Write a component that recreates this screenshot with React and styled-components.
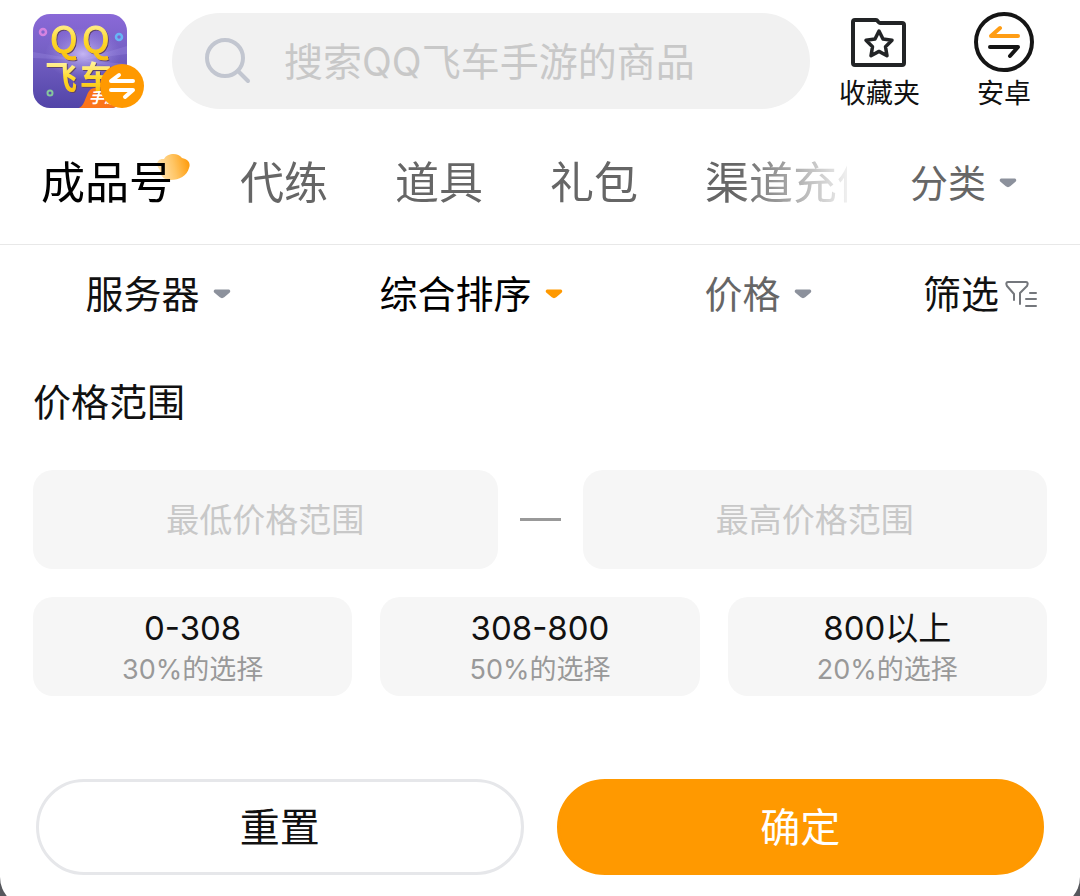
import { useState } from "react";
import styled, { createGlobalStyle } from "styled-components";

const tabs = ["成品号", "代练", "道具", "礼包", "渠道充值"];

const ranges = [
    { label: "0-308", note: "30%的选择" },
    { label: "308-800", note: "50%的选择" },
    { label: "800以上", note: "20%的选择" },
];

const App = () => {
    return (
        <>
            <GlobalStyle />
            <Page>
                <Sheet>
                    <Header />
                    <TabBar />
                    <FilterBar />
                    <PricePanel />
                </Sheet>
            </Page>
        </>
    );
}

const Header = () => {
    return (
        <HeaderContainer>
            <GameButton type="button" aria-label="切换游戏">
                <GameLogo />
            </GameButton>
            <SearchBox>
                <SearchIcon />
                <SearchInput type="search" aria-label="搜索商品" placeholder="搜索QQ飞车手游的商品" />
            </SearchBox>
            <HeaderLinks>
                <HeaderLink href="#favorites">
                    <FolderIcon />
                    <span>收藏夹</span>
                </HeaderLink>
                <HeaderLink href="#android">
                    <SwitchIcon />
                    <span>安卓</span>
                </HeaderLink>
            </HeaderLinks>
        </HeaderContainer>
    );
}

const TabBar = () => {
    const [active, setActive] = useState("成品号");

    return (
        <TabContainer>
            <TabList>
                {tabs.map((tab) => (
                    <Tab key={tab} type="button" $active={tab === active} onClick={() => setActive(tab)}>
                        {tab === active && <CloudMark />}
                        <TabText>{tab}</TabText>
                    </Tab>
                ))}
            </TabList>
            <MenuButton type="button" $color="#666666">
                分类
                <Arrow />
            </MenuButton>
        </TabContainer>
    );
}

const FilterBar = () => {
    return (
        <FilterContainer>
            <MenuButton type="button">
                服务器
                <Arrow />
            </MenuButton>
            <MenuButton type="button" $color="#000000">
                综合排序
                <Arrow color="#ff9900" />
            </MenuButton>
            <MenuButton type="button" $color="#666666">
                价格
                <Arrow />
            </MenuButton>
            <MenuButton type="button" $gap="6px">
                筛选
                <FunnelIcon />
            </MenuButton>
        </FilterContainer>
    );
}

const PricePanel = () => {
    const [low, setLow] = useState("");
    const [high, setHigh] = useState("");

    return (
        <Panel>
            <PanelTitle>价格范围</PanelTitle>
            <RangeRow>
                <PriceInput
                    aria-label="最低价格范围"
                    placeholder="最低价格范围"
                    inputMode="numeric"
                    value={low}
                    onChange={(e) => setLow(e.target.value)}
                />
                <Dash />
                <PriceInput
                    aria-label="最高价格范围"
                    placeholder="最高价格范围"
                    inputMode="numeric"
                    value={high}
                    onChange={(e) => setHigh(e.target.value)}
                />
            </RangeRow>
            <ChipRow>
                {ranges.map((range) => (
                    <Chip key={range.label} type="button">
                        <ChipLabel>{range.label}</ChipLabel>
                        <ChipNote>{range.note}</ChipNote>
                    </Chip>
                ))}
            </ChipRow>
            <ActionRow>
                <ActionButton type="button">重置</ActionButton>
                <ActionButton type="button" $primary>确定</ActionButton>
            </ActionRow>
        </Panel>
    );
}

const GameLogo = () => (
    <svg width="112" height="96" viewBox="0 0 112 96" aria-hidden="true">
        <defs>
            <linearGradient id="sky" x1="0" y1="0" x2="0" y2="1">
                <stop offset="0" stopColor="#8a69d8" />
                <stop offset="0.45" stopColor="#735fc2" />
                <stop offset="1" stopColor="#5244a8" />
            </linearGradient>
            <radialGradient id="glow">
                <stop offset="0" stopColor="#d9cbff" stopOpacity="0.8" />
                <stop offset="1" stopColor="#a99aec" stopOpacity="0" />
            </radialGradient>
            <linearGradient id="gold" x1="0" y1="0" x2="0" y2="1">
                <stop offset="0.2" stopColor="#fff3a6" />
                <stop offset="0.55" stopColor="#ffdb2e" />
                <stop offset="1" stopColor="#f7b800" />
            </linearGradient>
            <filter id="shade" x="-10%" y="-10%" width="120%" height="120%">
                <feDropShadow dx="1" dy="1" stdDeviation="0" floodColor="#5f4468" />
            </filter>
            <clipPath id="tile">
                <rect width="94" height="94" rx="17" />
            </clipPath>
        </defs>
        <g clipPath="url(#tile)">
            <rect width="94" height="94" fill="url(#sky)" />
            <path d="M48 46L0 38v6zM48 46L94 32v8zM48 46L94 50v6z" fill="#a090e4" opacity="0.3" />
            <ellipse cx="50" cy="40" rx="38" ry="26" fill="url(#glow)" />
            <path d="M46 94c8-3 6-20 16-20h32v20z" fill="#fb7419" />
            <g fontFamily='"Noto Sans CJK SC", sans-serif' fontWeight="700" filter="url(#shade)">
                <text x="17 49" y="39" fontSize="37" fontWeight="400" stroke="url(#gold)" fill="url(#gold)">QQ</text>
                <text x="12 47" y="75" fontSize="32" fill="url(#gold)">飞车</text>
            </g>
            <text x="56" y="89" fontFamily='"Noto Sans CJK SC", sans-serif' fontSize="15" fontWeight="700" fontStyle="italic" fill="#ffffff">手游</text>
        </g>
        <circle cx="10" cy="18" r="3" fill="none" stroke="#d583e0" strokeWidth="2.5" />
        <circle cx="86" cy="23" r="3" fill="none" stroke="#67b5f5" strokeWidth="2.5" />
        <circle cx="17" cy="79" r="2.5" fill="none" stroke="#86c69d" strokeWidth="2" />
        <circle cx="89" cy="72" r="22" fill="#ff9900" />
        <g fill="none" stroke="#ffffff" strokeWidth="4" strokeLinecap="round" strokeLinejoin="round">
            <path d="M100 67H78l8-6" />
            <path d="M78 76h22l-8 7" />
        </g>
    </svg>
);

const SearchIcon = () => (
    <svg width="46" height="46" viewBox="0 0 46 46" fill="none" stroke="#c2c6d0" strokeWidth="4" strokeLinecap="round" aria-hidden="true">
        <circle cx="20" cy="20" r="18" />
        <path d="M33 33l10 10" />
    </svg>
);

const FolderIcon = () => (
    <svg width="60" height="60" viewBox="0 0 60 60" fill="none" stroke="#222426" strokeWidth="4" strokeLinejoin="round" aria-hidden="true">
        <path d="M5 8h21c2 0 2 3 4 3h22a2 2 0 0 1 2 2v38a2 2 0 0 1-2 2H5a2 2 0 0 1-2-2V10a2 2 0 0 1 2-2z" />
        <path
            d="M29 19l4 8 9 1.300-6.500 6.400 1.500 9-8-4.300-8 4.300 1.500-9-6.500-6.400 9-1.300z"
            strokeWidth="3.500"
        />
    </svg>
);

const SwitchIcon = () => (
    <svg width="60" height="60" viewBox="0 0 60 60" fill="none" strokeWidth="4" strokeLinecap="round" strokeLinejoin="round" aria-hidden="true">
        <circle cx="30" cy="30" r="28" stroke="#151515" />
        <path d="M44 24H17l9-8" stroke="#ff9d14" />
        <path d="M16 35h28l-8 9" stroke="#151515" />
    </svg>
);

const Arrow = ({ color = "#8c919c" }) => (
    <svg width="18" height="10" viewBox="0 0 18 10" fill={color} aria-hidden="true">
        <path d="M3 0.500h12c2.500 0 3 2.200 1.200 3.600l-5 4.200c-1.400 1.100-3 1.100-4.400 0l-5-4.200C0 2.700 0.500 0.500 3 0.500z" />
    </svg>
);

const FunnelIcon = () => (
    <svg width="32" height="28" viewBox="0 0 32 28" fill="none" stroke="#74777c" strokeWidth="2" strokeLinecap="round" strokeLinejoin="round" aria-hidden="true">
        <path d="M9 20v-6L2 6C1 4 1 2 3 2h18c2 0 2 2 1 4l-7 7v11" />
        <path d="M25 13h6M21 19h10M21 26h10" />
    </svg>
);

const CloudMark = () => (
    <Cloud width="34" height="28" viewBox="0 0 34 28" aria-hidden="true">
        <defs>
            <linearGradient id="cloud" x1="0" y1="0.500" x2="1" y2="0.300">
                <stop offset="0" stopColor="#ffe3b0" />
                <stop offset="0.500" stopColor="#ffc564" />
                <stop offset="1" stopColor="#ff9a08" />
            </linearGradient>
        </defs>
        <path d="M8 6C11 0 22-1 26 5c6 1 9 5 7 10-2 8-10 12-18 12C7 27 4 22 4 17-1 12 1 5 8 6z" fill="url(#cloud)" />
    </Cloud>
);

const GlobalStyle = createGlobalStyle`
    * {
        box-sizing: border-box;
    }

    body {
        margin: 0;
        background-color: #56575c;
        color: #111111;
        font-family: Inter, "Noto Sans CJK SC", sans-serif;
    }

    button, input {
        margin: 0;
        padding: 0;
        border: none;
        background: none;
        color: inherit;
        font-family: inherit;
    }

    button {
        cursor: pointer;
    }

    svg {
        display: block;
        flex-shrink: 0;
    }
`;

const Page = styled.div`
    height: 100vh;
    overflow: hidden;
`;

const Sheet = styled.main`
    padding-bottom: 32px;
    border-radius: 0 0 30px 30px;
    background-color: #ffffff;
`;

const HeaderContainer = styled.header`
    display: flex;
    align-items: flex-start;
    padding: 12px 46px 0 33px;
`;

const GameButton = styled.button`
    width: 112px;
    padding-top: 2px;
`;

const SearchBox = styled.div`
    flex: 1;
    min-width: 0;
    height: 96px;
    margin: 1px 29px 0 27px;
    padding: 0 33px;
    display: flex;
    align-items: center;
    gap: 33px;
    border-radius: 48px;
    background-color: #f1f1f1;
`;

const SearchInput = styled.input`
    flex: 1;
    min-width: 0;
    height: 60px;
    font-size: 39px;
    outline: none;

    &::placeholder {
        color: #c8c8c8;
        opacity: 1;
    }
`;

const HeaderLinks = styled.nav`
    display: flex;
    gap: 54px;
`;

const HeaderLink = styled.a`
    display: flex;
    flex-direction: column;
    align-items: center;
    gap: 7px;
    height: 97px;
    color: #111111;
    font-size: 27px;
    line-height: 30px;
    text-decoration: none;
`;

const TabContainer = styled.div`
    display: flex;
    align-items: center;
    height: 135px;
    padding: 12px 63px 0 41px;
    border-bottom: 1px solid #e8e8e8;
`;

const TabList = styled.nav`
    flex: 1;
    min-width: 0;
    display: flex;
    gap: 67px;
    height: 80px;
    margin-right: 63px;
    overflow: hidden;
    mask-image: linear-gradient(to left, rgba(0, 0, 0, 0.1), #000000 110px);
`;

const Tab = styled.button`
    position: relative;
    flex-shrink: 0;
    padding-bottom: 6px;
    font-size: 44px;
    color: ${(props) => (props.$active ? "#000000" : "#666666")};
    white-space: nowrap;
`;

const TabText = styled.span`
    position: relative;
`;

const Cloud = styled.svg`
    position: absolute;
    top: 10px;
    right: -17px;
`;

const MenuButton = styled.button`
    display: flex;
    align-items: center;
    justify-content: center;
    gap: ${(props) => props.$gap || "13px"};
    color: ${(props) => props.$color || "#111111"};
    font-size: 38px;
    line-height: 56px;
    white-space: nowrap;
`;

const FilterContainer = styled.div`
    display: grid;
    grid-template-columns: 316fr 310fr 264fr 180fr;
    align-items: center;
    height: 98px;
    padding-right: 10px;
`;

const Panel = styled.section`
    padding: 31px 33px 0;
`;

const PanelTitle = styled.h2`
    margin: 0 0 40px;
    font-size: 38px;
    font-weight: 400;
    line-height: 56px;
`;

const RangeRow = styled.div`
    display: flex;
    align-items: center;
    gap: 22px;
`;

const PriceInput = styled.input`
    flex: 1;
    min-width: 0;
    height: 99px;
    border-radius: 20px;
    background-color: #f6f6f6;
    font-size: 33px;
    text-align: center;

    &::placeholder {
        color: #c8c8c8;
        opacity: 1;
    }
`;

const Dash = styled.span`
    width: 41px;
    height: 3px;
    background-color: #999999;
`;

const ChipRow = styled.div`
    display: grid;
    grid-template-columns: repeat(3, 1fr);
    gap: 28px;
    margin-top: 28px;
`;

const Chip = styled.button`
    display: flex;
    flex-direction: column;
    align-items: center;
    justify-content: center;
    height: 99px;
    padding-top: 4px;
    border-radius: 20px;
    background-color: #f6f6f6;
`;

const ChipLabel = styled.span`
    font-size: 33px;
    line-height: 42px;
`;

const ChipNote = styled.span`
    color: #999999;
    font-size: 27px;
    line-height: 42px;
`;

const ActionRow = styled.div`
    display: flex;
    gap: 33px;
    margin-top: 83px;
    padding: 0 3px;
`;

const ActionButton = styled.button`
    flex: 1;
    height: 96px;
    padding-bottom: 5px;
    border: 3px solid ${(props) => (props.$primary ? "#ff9900" : "#e6e7ea")};
    border-radius: 48px;
    background-color: ${(props) => (props.$primary ? "#ff9900" : "#ffffff")};
    color: ${(props) => (props.$primary ? "#ffffff" : "#111111")};
    font-size: 40px;
`;

export default App;
